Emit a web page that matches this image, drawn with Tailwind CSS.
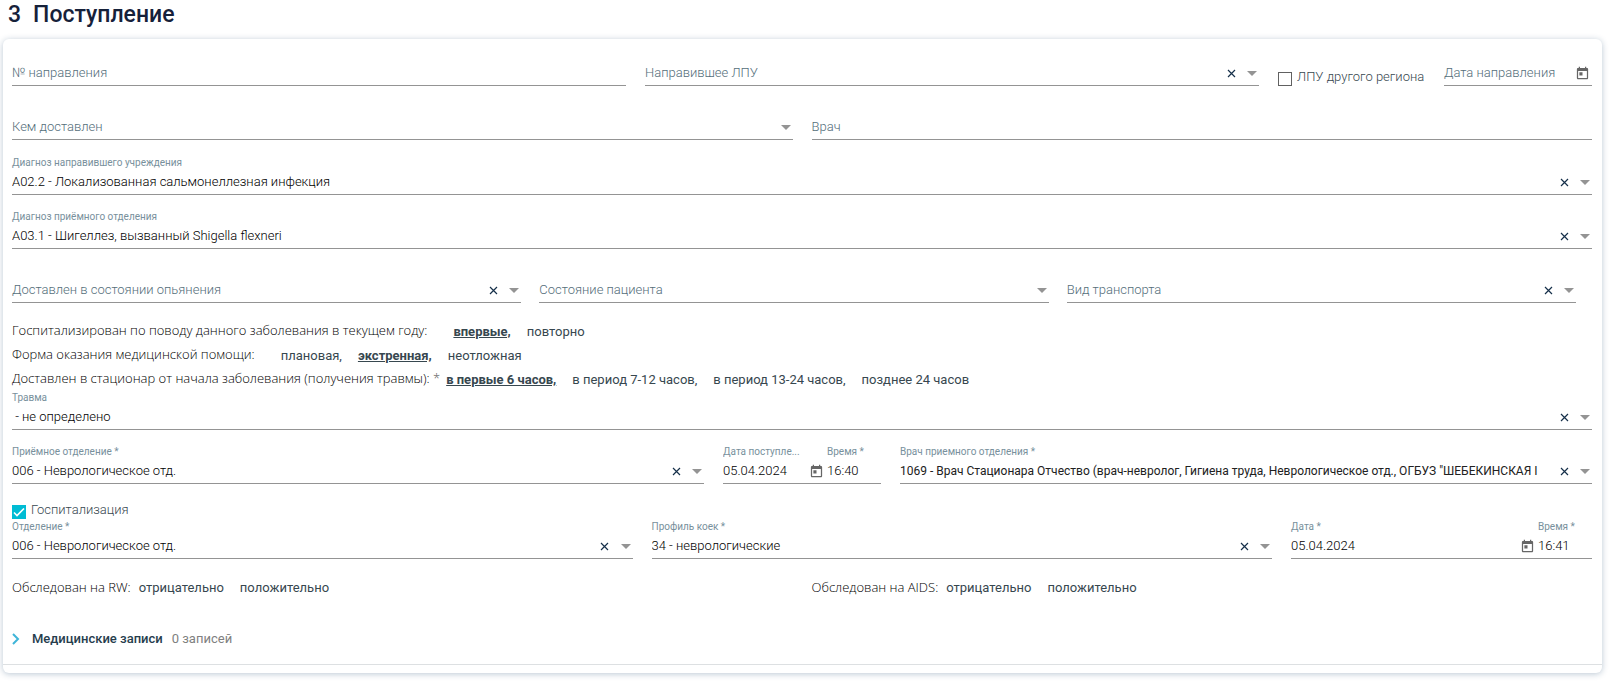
<!DOCTYPE html>
<html lang="ru">
<head>
<meta charset="utf-8">
<meta name="viewport" content="width=device-width, initial-scale=1">
<title>Поступление</title>
<script src="https://cdn.jsdelivr.net/npm/@tailwindcss/browser@4"></script>
</head>
<body class="min-h-screen bg-white font-[Roboto,sans-serif] text-[13px] text-black">
<svg class="hidden">
  <symbol id="x" viewBox="0 0 9 9"><path d="M1 1l7 7M8 1l-7 7" fill="none" stroke="#16304a" stroke-width="1.2"/></symbol>
  <symbol id="arrow" viewBox="0 0 10 5"><path d="M0 0h10L5 5z" fill="#949494"/></symbol>
  <symbol id="cal" viewBox="0 0 24 24"><path d="M19 3h-1V1h-2v2H8V1H6v2H5c-1.11 0-1.99.9-1.99 2L3 19c0 1.1.89 2 2 2h14c1.1 0 2-.9 2-2V5c0-1.1-.9-2-2-2zm0 16H5V8h14v11zM7 10h5v5H7z" fill="#666"/></symbol>
</svg>
<main class="pb-[9px]">
  <h1 class="flex gap-3 pt-px pl-2 text-[23px] leading-7 font-medium text-[#16213a]"><span>3</span><span>Поступление</span></h1>

  <form class="mt-[10px] mr-2 ml-[3px] rounded-md bg-white pt-[6px] pb-2 shadow-[0_1px_6px_rgba(30,70,110,0.3)]">
    <div class="pr-[10px] pl-[9px]">

      <div class="grid grid-cols-[1fr_1fr_147px_148px] gap-x-[19px]">
        <div class="border-b border-[#949494] pt-4">
          <div class="relative flex h-6 items-center">
            <label for="num" class="pointer-events-none absolute left-0 font-light text-[#546e7a]">№ направления</label>
            <input id="num" type="text" class="w-full min-w-0 flex-1 font-light outline-none">
          </div>
        </div>
        <div class="border-b border-[#949494] pt-4">
          <div class="relative flex h-6 items-center gap-[10px] pr-[2px]">
            <label for="lpu" class="pointer-events-none absolute left-0 font-light text-[#546e7a]">Направившее ЛПУ</label>
            <select id="lpu" class="min-w-0 flex-1 appearance-none font-light outline-none"><option></option></select>
            <button type="button" aria-label="Очистить" class="flex w-3 justify-center"><svg class="size-[9px]"><use href="#x"/></svg></button>
            <svg class="h-[5px] w-[10px]"><use href="#arrow"/></svg>
          </div>
        </div>
        <label class="flex items-end gap-[5px] text-[#37474f]">
          <input type="checkbox" class="size-[14px] appearance-none border border-[#616161]">
          <span class="font-light whitespace-nowrap">ЛПУ другого региона</span>
        </label>
        <div class="border-b border-[#949494] pt-4">
          <div class="relative flex h-6 items-center pr-[2px]">
            <label for="ddate" class="pointer-events-none absolute left-0 font-light text-[#546e7a]">Дата направления</label>
            <input id="ddate" type="text" class="w-full min-w-0 flex-1 font-light outline-none">
            <button type="button" aria-label="Календарь"><svg class="size-[15px]"><use href="#cal"/></svg></button>
          </div>
        </div>
      </div>

      <div class="mt-[13px] grid grid-cols-2 gap-x-[19px]">
        <div class="border-b border-[#949494] pt-4">
          <div class="relative flex h-6 items-center pr-[2px]">
            <label for="who" class="pointer-events-none absolute left-0 font-light text-[#546e7a]">Кем доставлен</label>
            <select id="who" class="min-w-0 flex-1 appearance-none font-light outline-none"><option></option></select>
            <svg class="h-[5px] w-[10px]"><use href="#arrow"/></svg>
          </div>
        </div>
        <div class="border-b border-[#949494] pt-4">
          <div class="relative flex h-6 items-center">
            <label for="doc" class="pointer-events-none absolute left-0 font-light text-[#546e7a]">Врач</label>
            <input id="doc" type="text" class="w-full min-w-0 flex-1 font-light outline-none">
          </div>
        </div>
      </div>

      <div class="mt-[14px] border-b border-[#949494]">
        <label for="dg1" class="block h-4 text-[10px] leading-[18px] text-[#78909c]">Диагноз направившего учреждения</label>
        <div class="flex h-6 items-center gap-[10px] pr-[2px]">
          <select id="dg1" class="min-w-0 flex-1 appearance-none font-light outline-none"><option>A02.2 - Локализованная сальмонеллезная инфекция</option></select>
          <button type="button" aria-label="Очистить" class="flex w-3 justify-center"><svg class="size-[9px]"><use href="#x"/></svg></button>
          <svg class="h-[5px] w-[10px]"><use href="#arrow"/></svg>
        </div>
      </div>

      <div class="mt-[13px] border-b border-[#949494]">
        <label for="dg2" class="block h-4 text-[10px] leading-[18px] text-[#78909c]">Диагноз приёмного отделения</label>
        <div class="flex h-6 items-center gap-[10px] pr-[2px]">
          <select id="dg2" class="min-w-0 flex-1 appearance-none font-light outline-none"><option>A03.1 - Шигеллез, вызванный Shigella flexneri</option></select>
          <button type="button" aria-label="Очистить" class="flex w-3 justify-center"><svg class="size-[9px]"><use href="#x"/></svg></button>
          <svg class="h-[5px] w-[10px]"><use href="#arrow"/></svg>
        </div>
      </div>

      <div class="mt-[13px] grid grid-cols-3 gap-x-[18px] pr-4">
        <div class="border-b border-[#949494] pt-4">
          <div class="relative flex h-6 items-center gap-[10px] pr-[2px]">
            <label for="drunk" class="pointer-events-none absolute left-0 font-light text-[#546e7a]">Доставлен в состоянии опьянения</label>
            <select id="drunk" class="min-w-0 flex-1 appearance-none font-light outline-none"><option></option></select>
            <button type="button" aria-label="Очистить" class="flex w-3 justify-center"><svg class="size-[9px]"><use href="#x"/></svg></button>
            <svg class="h-[5px] w-[10px]"><use href="#arrow"/></svg>
          </div>
        </div>
        <div class="border-b border-[#949494] pt-4">
          <div class="relative flex h-6 items-center pr-[2px]">
            <label for="state" class="pointer-events-none absolute left-0 font-light text-[#546e7a]">Состояние пациента</label>
            <select id="state" class="min-w-0 flex-1 appearance-none font-light outline-none"><option></option></select>
            <svg class="h-[5px] w-[10px]"><use href="#arrow"/></svg>
          </div>
        </div>
        <div class="border-b border-[#949494] pt-4">
          <div class="relative flex h-6 items-center gap-[10px] pr-[2px]">
            <label for="transp" class="pointer-events-none absolute left-0 font-light text-[#546e7a]">Вид транспорта</label>
            <select id="transp" class="min-w-0 flex-1 appearance-none font-light outline-none"><option></option></select>
            <button type="button" aria-label="Очистить" class="flex w-3 justify-center"><svg class="size-[9px]"><use href="#x"/></svg></button>
            <svg class="h-[5px] w-[10px]"><use href="#arrow"/></svg>
          </div>
        </div>
      </div>

      <div class="mt-4 flex h-6 items-center gap-4 text-[#37474f]">
        <span class="mr-[10px] font-['Open_Sans'] font-light text-black">Госпитализирован по поводу данного заболевания в текущем году:</span>
        <button type="button" class="pt-0.5 font-bold underline">впервые,</button>
        <button type="button" class="pt-0.5">повторно</button>
      </div>
      <div class="flex h-6 items-center gap-4 text-[#37474f]">
        <span class="mr-[10px] font-['Open_Sans'] font-light text-black">Форма оказания медицинской помощи:</span>
        <button type="button" class="pt-0.5">плановая,</button>
        <button type="button" class="pt-0.5 font-bold underline">экстренная,</button>
        <button type="button" class="pt-0.5">неотложная</button>
      </div>
      <div class="flex h-6 items-center gap-4 text-[#37474f]">
        <span class="-mr-[10px] font-['Open_Sans'] font-light text-black">Доставлен в стационар от начала заболевания (получения травмы): <span class="text-[#616161]">*</span></span>
        <button type="button" class="pt-0.5 font-bold underline">в первые 6 часов,</button>
        <button type="button" class="pt-0.5">в период 7-12 часов,</button>
        <button type="button" class="pt-0.5">в период 13-24 часов,</button>
        <button type="button" class="pt-0.5">позднее 24 часов</button>
      </div>

      <div class="-mt-0.5 border-b border-[#949494]">
        <label for="trauma" class="block h-4 text-[10px] leading-[18px] text-[#78909c]">Травма</label>
        <div class="flex h-6 items-center gap-[10px] pr-[2px]">
          <select id="trauma" class="min-w-0 flex-1 appearance-none font-light outline-none"><option>&nbsp;- не определено</option></select>
          <button type="button" aria-label="Очистить" class="flex w-3 justify-center"><svg class="size-[9px]"><use href="#x"/></svg></button>
          <svg class="h-[5px] w-[10px]"><use href="#arrow"/></svg>
        </div>
      </div>

      <div class="mt-[13px] grid grid-cols-[minmax(0,1fr)_158px_minmax(0,1fr)] gap-x-[19px]">
        <div class="border-b border-[#949494]">
          <label for="dep" class="block h-4 text-[10px] leading-[18px] text-[#78909c]">Приёмное отделение *</label>
          <div class="flex h-6 items-center gap-[10px] pr-[2px]">
            <select id="dep" class="min-w-0 flex-1 appearance-none font-light outline-none"><option>006 - Неврологическое отд.</option></select>
            <button type="button" aria-label="Очистить" class="flex w-3 justify-center"><svg class="size-[9px]"><use href="#x"/></svg></button>
            <svg class="h-[5px] w-[10px]"><use href="#arrow"/></svg>
          </div>
        </div>
        <div class="flex gap-[3px] border-b border-[#949494]">
          <div class="min-w-0 flex-1">
            <label for="adate" class="mr-5 block h-4 truncate text-[10px] leading-[18px] text-[#78909c]">Дата поступле...</label>
            <div class="flex h-6 items-center">
              <input id="adate" type="text" value="05.04.2024" class="w-full min-w-0 flex-1 font-light outline-none">
              <button type="button" aria-label="Календарь"><svg class="size-[15px]"><use href="#cal"/></svg></button>
            </div>
          </div>
          <div class="w-[54px]">
            <label for="atime" class="block h-4 text-[10px] leading-[18px] text-[#78909c]">Время *</label>
            <div class="flex h-6 items-center"><input id="atime" type="text" value="16:40" class="w-full min-w-0 font-light outline-none"></div>
          </div>
        </div>
        <div class="border-b border-[#949494]">
          <label for="adoc" class="block h-4 text-[10px] leading-[18px] text-[#78909c]">Врач приемного отделения *</label>
          <div class="flex h-6 items-center gap-[10px] pr-[2px]">
            <select id="adoc" class="min-w-0 flex-1 appearance-none text-xs text-[#212121] outline-none"><option>1069 - Врач Стационара Отчество (врач-невролог, Гигиена труда, Неврологическое отд., ОГБУЗ "ШЕБЕКИНСКАЯ I</option></select>
            <button type="button" aria-label="Очистить" class="flex w-3 justify-center"><svg class="size-[9px]"><use href="#x"/></svg></button>
            <svg class="h-[5px] w-[10px]"><use href="#arrow"/></svg>
          </div>
        </div>
      </div>

      <div class="mt-[17px] flex h-[18px]">
        <label class="flex items-end gap-[5px] text-[#37474f]">
          <span class="relative flex size-[14px]">
            <input type="checkbox" checked class="peer size-[14px] appearance-none bg-[#00bcd4]">
            <svg viewBox="0 0 14 14" class="pointer-events-none absolute inset-0 hidden peer-checked:block"><path d="M2 7.5l3 3 7-7" fill="none" stroke="#fff" stroke-width="1.6"/></svg>
          </span>
          <span class="leading-[18px] font-light">Госпитализация</span>
        </label>
      </div>

      <div class="-mt-px grid grid-cols-[minmax(0,1fr)_minmax(0,1fr)_301px] gap-x-[19px]">
        <div class="border-b border-[#949494]">
          <label for="dep2" class="block h-4 text-[10px] leading-[18px] text-[#78909c]">Отделение *</label>
          <div class="flex h-6 items-center gap-[10px] pr-[2px]">
            <select id="dep2" class="min-w-0 flex-1 appearance-none font-light outline-none"><option>006 - Неврологическое отд.</option></select>
            <button type="button" aria-label="Очистить" class="flex w-3 justify-center"><svg class="size-[9px]"><use href="#x"/></svg></button>
            <svg class="h-[5px] w-[10px]"><use href="#arrow"/></svg>
          </div>
        </div>
        <div class="border-b border-[#949494]">
          <label for="bed" class="block h-4 text-[10px] leading-[18px] text-[#78909c]">Профиль коек *</label>
          <div class="flex h-6 items-center gap-[10px] pr-[2px]">
            <select id="bed" class="min-w-0 flex-1 appearance-none font-light outline-none"><option>34 - неврологические</option></select>
            <button type="button" aria-label="Очистить" class="flex w-3 justify-center"><svg class="size-[9px]"><use href="#x"/></svg></button>
            <svg class="h-[5px] w-[10px]"><use href="#arrow"/></svg>
          </div>
        </div>
        <div class="flex gap-[3px] border-b border-[#949494]">
          <div class="min-w-0 flex-1">
            <label for="hdate" class="block h-4 text-[10px] leading-[18px] text-[#78909c]">Дата *</label>
            <div class="flex h-6 items-center">
              <input id="hdate" type="text" value="05.04.2024" class="w-full min-w-0 flex-1 font-light outline-none">
              <button type="button" aria-label="Календарь"><svg class="size-[15px]"><use href="#cal"/></svg></button>
            </div>
          </div>
          <div class="w-[54px]">
            <label for="htime" class="block h-4 text-[10px] leading-[18px] text-[#78909c]">Время *</label>
            <div class="flex h-6 items-center"><input id="htime" type="text" value="16:41" class="w-full min-w-0 font-light outline-none"></div>
          </div>
        </div>
      </div>

      <div class="mt-[17px] grid grid-cols-2 gap-x-[19px] text-[#37474f]">
        <div class="flex h-6 items-center gap-4">
          <span class="-mr-2 font-['Open_Sans'] font-light text-black">Обследован на RW:</span>
          <button type="button">отрицательно</button>
          <button type="button">положительно</button>
        </div>
        <div class="flex h-6 items-center gap-4">
          <span class="-mr-2 font-['Open_Sans'] font-light text-black">Обследован на AIDS:</span>
          <button type="button">отрицательно</button>
          <button type="button">положительно</button>
        </div>
      </div>

      <button type="button" class="mt-[27px] flex h-6 items-center">
        <svg viewBox="0 0 8 12" class="mr-3 h-3 w-2"><path d="M1 1l5 5-5 5" fill="none" stroke="#3fb5d8" stroke-width="2"/></svg>
        <span class="font-medium text-[#263d4d]">Медицинские записи</span>
        <span class="ml-[9px] text-[#808080]">0 записей</span>
      </button>
    </div>
    <hr class="mt-[13px] border-[#dde0e2]">
  </form>
</main>
</body>
</html>
